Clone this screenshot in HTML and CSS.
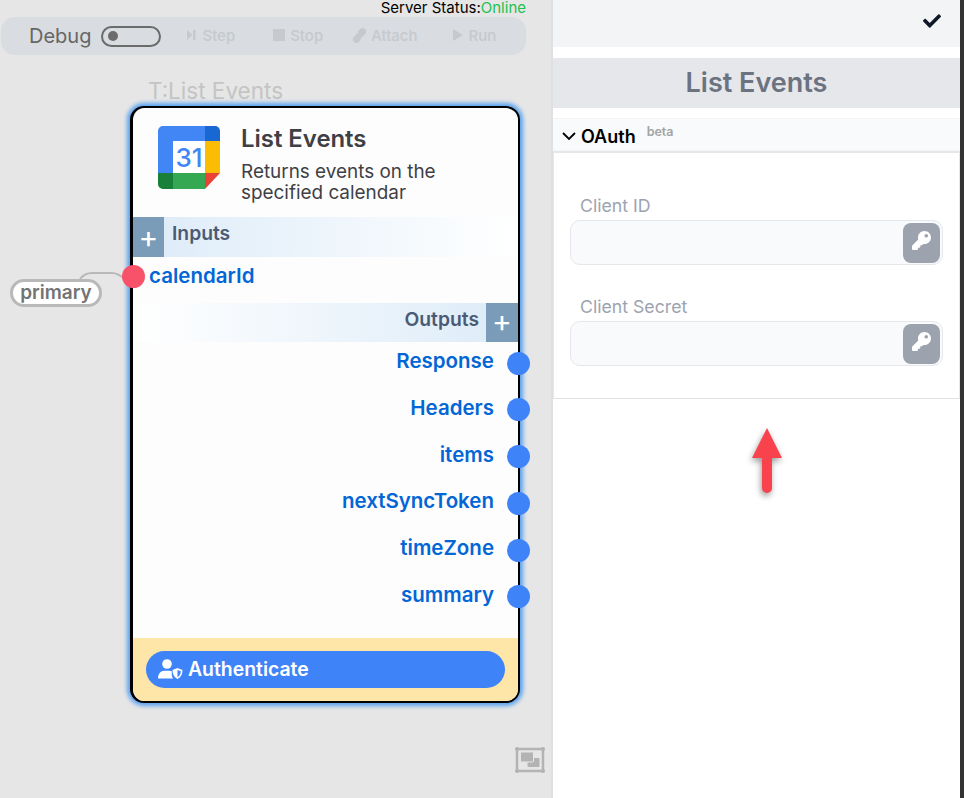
FILE: index.html
```html
<!DOCTYPE html>
<html lang="en">
<head>
  <meta charset="UTF-8">
  <meta name="viewport" content="width=device-width, initial-scale=1.0">
  <title>List Events</title>
  <link rel="stylesheet" href="styles.css">
</head>
<body>
  <!-- Flow canvas -->
  <main class="canvas">
    <div class="status">Server Status:<span class="status-on">Online</span></div>
    <div class="toolbar">
      <span class="debug-label">Debug</span>
      <span class="toggle"><span class="toggle-dot"></span></span>
      <span class="tool tool-step">
        <svg width="9" height="12" viewBox="0 0 9 12"><path d="M0 1l5.500 5L0 11zM6 1h2.500v10H6z"/></svg>Step
      </span>
      <span class="tool tool-stop">
        <svg width="12" height="12" viewBox="0 0 12 12"><rect width="12" height="12"/></svg>Stop
      </span>
      <span class="tool tool-attach">
        <svg width="15" height="15" viewBox="0 0 15 15" fill="none" stroke="#c6c9cd" stroke-width="1.600"><path d="M6.500 4l2-2.200a2.700 2.700 0 0 1 4 3.800l-2.500 2.600a2.700 2.700 0 0 1-3.800 0M8.500 11l-2 2.200a2.700 2.700 0 0 1-4-3.800L5 6.800a2.700 2.700 0 0 1 3.800 0"/></svg>Attach
      </span>
      <span class="tool tool-run">
        <svg width="10" height="12" viewBox="0 0 10 12"><path d="M0 0l10 6-10 6z"/></svg>Run
      </span>
    </div>

    <div class="node-title">T:List Events</div>

    <svg class="wire" width="70" height="30" viewBox="0 0 70 30" fill="none"><path d="M21 21c3-4 7-6 12-6h20c5 0 8 2 13 6" stroke="#b9b9b9" stroke-width="2"/></svg>
    <div class="chip">primary</div>

    <div class="node">
      <div class="node-head">
        <svg class="gcal" width="62" height="63" viewBox="0 0 62 63">
          <path d="M5 0h42v15H15v32H0V5a5 5 0 0 1 5-5z" fill="#4285f4"/>
          <path d="M47 0h10a5 5 0 0 1 5 5v10H47z" fill="#1967d2"/>
          <rect x="47" y="15" width="15" height="32" fill="#fbbc04"/>
          <path d="M47 47h15L47 63z" fill="#ea4335"/>
          <rect x="15" y="47" width="32" height="16" fill="#34a853"/>
          <path d="M0 47h15v16H5a5 5 0 0 1-5-5z" fill="#188038"/>
          <rect x="15" y="15" width="32" height="32" fill="#fff"/>
          <text x="31" y="41" text-anchor="middle" class="gcal-num">31</text>
        </svg>
        <div class="node-info">
          <h2 class="node-name">List Events</h2>
          <p class="node-desc">Returns events on the specified calendar</p>
        </div>
      </div>

      <div class="band band-in">
        <span class="plus">+</span>
        <span class="band-label">Inputs</span>
      </div>
      <div class="input-row">
        <span class="pin pin-in"></span>
        <span class="port">calendarId</span>
      </div>

      <div class="band band-out">
        <span class="band-label">Outputs</span>
        <span class="plus">+</span>
      </div>
      <ul class="outputs">
        <li class="port-row"><span class="port">Response</span><span class="pin pin-out"></span></li>
        <li class="port-row"><span class="port">Headers</span><span class="pin pin-out"></span></li>
        <li class="port-row"><span class="port">items</span><span class="pin pin-out"></span></li>
        <li class="port-row"><span class="port">nextSyncToken</span><span class="pin pin-out"></span></li>
        <li class="port-row"><span class="port">timeZone</span><span class="pin pin-out"></span></li>
        <li class="port-row"><span class="port">summary</span><span class="pin pin-out"></span></li>
      </ul>

      <div class="node-foot">
        <button class="auth-btn" type="button">
          <svg width="25" height="20" viewBox="0 0 25 20" fill="#fff">
            <circle cx="9" cy="5" r="4.800"/>
            <path d="M0 19.500c0-5 3-7.800 6-7.800h5c1 0 2 .2 2.800.6v3.200c0 1.600.6 3 1.500 4z"/>
            <path d="M19.500 9l5 1.900c0 4.200-1.600 7.500-5 9-3.400-1.500-5-4.800-5-9z"/>
            <path d="M19.500 11l3.300 1.200c-.1 2.700-1.300 4.900-3.300 5.900z" fill="#3f83f8"/>
          </svg>
          Authenticate
        </button>
      </div>
    </div>

    <svg class="map-btn" width="30" height="26" viewBox="0 0 30 26" fill="#b3b3b3">
      <rect x="2" y="2" width="26" height="22" fill="none" stroke="#b3b3b3" stroke-width="2.500"/>
      <circle cx="2" cy="2" r="2"/><circle cx="28" cy="2" r="2"/><circle cx="2" cy="24" r="2"/><circle cx="28" cy="24" r="2"/>
      <rect x="12.500" y="11" width="12" height="9" rx="1"/>
      <rect x="5.500" y="5" width="13" height="10" rx="1" stroke="#e6e6e6" stroke-width="1"/>
    </svg>
  </main>

  <!-- Settings panel -->
  <aside class="panel">
    <div class="panel-top">
      <svg width="18" height="18" viewBox="0 0 512 512" fill="#111827"><path d="M173.898 439.404l-166.4-166.4c-9.997-9.997-9.997-26.206 0-36.204l36.203-36.204c9.997-9.998 26.207-9.998 36.204 0L192 312.69 432.095 72.596c9.997-9.997 26.207-9.997 36.204 0l36.203 36.204c9.997 9.997 9.997 26.206 0 36.204l-294.4 294.401c-9.998 9.997-26.207 9.997-36.204-.001z"/></svg>
    </div>
    <h1 class="panel-title">List Events</h1>
    <section class="section">
      <div class="section-head">
        <svg width="14" height="9" viewBox="0 0 14 9"><path d="M1 1l6 6 6-6" fill="none" stroke="#000" stroke-width="1.800"/></svg>
        <span class="section-name">OAuth</span>
        <span class="beta">beta</span>
      </div>
      <div class="section-body">
        <label class="field-label">Client ID</label>
        <div class="field">
          <span class="key-btn">
            <svg class="key-icon" width="19" height="19" viewBox="0 0 512 512" fill="#fff"><path d="M512 176.001C512 273.203 433.202 352 336 352c-11.220 0-22.190-1.062-32.827-3.069l-24.012 27.014A23.999 23.999 0 0 1 261.223 384H224v40c0 13.255-10.745 24-24 24h-40v40c0 13.255-10.745 24-24 24H24c-13.255 0-24-10.745-24-24v-78.059c0-6.365 2.529-12.470 7.029-16.971l161.802-161.802C163.108 213.814 160 195.271 160 176 160 78.798 238.797.001 335.999 0 433.488-.001 512 78.511 512 176.001zM336 128c0 26.510 21.490 48 48 48s48-21.490 48-48-21.490-48-48-48-48 21.490-48 48z"/></svg>
          </span>
        </div>
        <label class="field-label">Client Secret</label>
        <div class="field">
          <span class="key-btn">
            <svg class="key-icon" width="19" height="19" viewBox="0 0 512 512" fill="#fff"><path d="M512 176.001C512 273.203 433.202 352 336 352c-11.220 0-22.190-1.062-32.827-3.069l-24.012 27.014A23.999 23.999 0 0 1 261.223 384H224v40c0 13.255-10.745 24-24 24h-40v40c0 13.255-10.745 24-24 24H24c-13.255 0-24-10.745-24-24v-78.059c0-6.365 2.529-12.470 7.029-16.971l161.802-161.802C163.108 213.814 160 195.271 160 176 160 78.798 238.797.001 335.999 0 433.488-.001 512 78.511 512 176.001zM336 128c0 26.510 21.490 48 48 48s48-21.490 48-48-21.490-48-48-48-48 21.490-48 48z"/></svg>
          </span>
        </div>
      </div>
    </section>
    <div class="panel-rest">
      <svg class="arrow" width="50" height="80" viewBox="0 0 50 80">
        <path d="M25 5l15 30H30v30a5 5 0 0 1-10 0V35H10z" fill="#f8424c"/>
      </svg>
    </div>
  </aside>
</body>
</html>
```

FILE: styles.css
```css
* {
  box-sizing: border-box;
}
html, body {
  height: 100%;
}
body {
  margin: 0;
  display: flex;
  overflow: hidden;
  padding-right: 4px;
  font-family: Inter, "Liberation Sans", sans-serif;
  background: #333;
}

/* canvas */
.canvas {
  position: relative;
  width: 553px;
  flex: none;
  background: #e6e6e6;
  border-right: 2px solid #dee0e3;
}
.status {
  height: 17px;
  padding-right: 25px;
  text-align: right;
  font-size: 15px;
  line-height: 15px;
  color: #000;
}
.status-on {
  color: #1ec14f;
}
.toolbar {
  display: flex;
  align-items: center;
  width: 525px;
  height: 38px;
  margin-left: 1px;
  padding-left: 28px;
  border-radius: 14px;
  background: #d9dce0;
}
.debug-label {
  font-size: 20px;
  color: #666;
}
.toggle {
  display: flex;
  align-items: center;
  width: 60px;
  height: 21px;
  margin-left: 10px;
  padding-left: 5px;
  border: 2px solid #6b6b6b;
  border-radius: 11px;
}
.toggle-dot {
  width: 10px;
  height: 10px;
  border-radius: 50%;
  background: #6b6b6b;
}
.tool {
  display: flex;
  align-items: center;
  font-size: 15px;
  font-weight: 500;
  line-height: 16px;
  color: #c6c9cd;
}
.tool svg {
  fill: #c6c9cd;
  margin-top: -2px;
}
.tool-step { margin-left: 26px; gap: 6px; }
.tool-stop { margin-left: 38px; gap: 5px; }
.tool-attach { margin-left: 29px; gap: 4px; }
.tool-run { margin-left: 35px; gap: 6px; }

.node-title {
  position: absolute;
  left: 148px;
  top: 77px;
  font-size: 22.500px;
  color: #c4c4c4;
}
.wire {
  position: absolute;
  left: 59px;
  top: 258px;
}
.chip {
  position: absolute;
  left: 10px;
  top: 279px;
  width: 92px;
  height: 28px;
  border: 3px solid #b9b9b9;
  border-radius: 14px;
  background: #fff;
  text-align: center;
  font-size: 19px;
  font-weight: 600;
  line-height: 22px;
  color: #737373;
}
.map-btn {
  position: absolute;
  left: 515px;
  top: 747px;
}

/* node */
.node {
  position: absolute;
  left: 130px;
  top: 106px;
  width: 390px;
  height: 597px;
  display: flex;
  flex-direction: column;
  border: 2px solid #000;
  border-left-width: 3px;
  border-radius: 14px;
  background: #fdfdfd;
  box-shadow: 0 0 4px 3px #5aa2ee;
}
.node-head {
  display: flex;
  height: 109px;
  padding: 18px 0 0 25px;
}
.gcal {
  flex: none;
}
.gcal-num {
  font-family: Inter, sans-serif;
  font-size: 26px;
  font-weight: 500;
  fill: #4285f4;
}
.node-info {
  margin: -1px 0 0 21px;
}
.node-name {
  margin: 0;
  font-size: 23.900px;
  font-weight: 600;
  line-height: 28px;
  color: #3f3f46;
}
.node-desc {
  width: 240px;
  margin: 8px 0 0;
  font-size: 18.900px;
  line-height: 21px;
  color: #3f3f46;
}
.band {
  display: flex;
  height: 40px;
  font-size: 19.300px;
  font-weight: 600;
  color: #4b5b73;
}
.band-in {
  background: linear-gradient(90deg, #dcebf8, #fff);
}
.band-out {
  height: 38.500px;
  justify-content: flex-end;
  background: linear-gradient(90deg, #fff, #dcebf8);
}
.band-label {
  padding-top: 4px;
  line-height: 24px;
}
.band-in .band-label { margin-left: 8px; }
.band-out .band-label { margin-right: 7px; }
.plus {
  width: 31px;
  text-align: center;
  background: #7b9cb8;
  color: #fff;
  font-size: 30px;
  font-weight: 400;
  line-height: 40px;
}
.band-out .plus {
  width: 32px;
  line-height: 36px;
}
.input-row {
  position: relative;
  height: 46px;
  padding-left: 16px;
}
.port {
  font-size: 20.500px;
  font-weight: 600;
  line-height: 38px;
  color: #0366d6;
}
.pin {
  position: absolute;
  width: 23px;
  height: 23px;
  border-radius: 50%;
}
.pin-in {
  left: -11px;
  top: 8px;
  background: #f8516a;
}
.pin-out {
  right: -12px;
  top: 10px;
  background: #3f83f8;
}
.outputs {
  flex: 1;
  margin: 0;
  padding: 0;
  list-style: none;
}
.port-row {
  position: relative;
  height: 46.800px;
  padding: 0.500px 24px 0 0;
  text-align: right;
}
.node-foot {
  height: 63px;
  padding: 13px 13px 0;
  border-radius: 0 0 12px 12px;
  background: #fde6a8;
}
.auth-btn {
  display: flex;
  align-items: center;
  gap: 5px;
  width: 100%;
  height: 37px;
  padding: 0 0 1px 12px;
  border: 0;
  border-radius: 19px;
  background: #3f83f8;
  color: #fff;
  font-family: inherit;
  font-size: 19.400px;
  font-weight: 600;
}

/* settings panel */
.panel {
  flex: 1;
  display: flex;
  flex-direction: column;
  min-width: 0;
  background: #fff;
}
.panel-top {
  display: flex;
  justify-content: flex-end;
  align-items: flex-start;
  height: 47px;
  padding: 12px 19px 0 0;
  background: #f3f4f6;
}
.panel-title {
  height: 50px;
  margin: 11px 0 10px;
  text-align: center;
  background: #e5e7eb;
  color: #6b7280;
  font-size: 27px;
  font-weight: 600;
  line-height: 50px;
}
.section-head {
  display: flex;
  align-items: center;
  height: 33px;
  padding: 3px 0 0 9px;
  border-top: 1px solid #f3f4f6;
  border-bottom: 1px solid #f3f4f6;
  background: #f9fafb;
}
.section-name {
  margin-left: 5px;
  font-size: 18px;
  font-weight: 600;
  color: #000;
}
.beta {
  margin: -10px 0 0 11px;
  font-size: 12.500px;
  font-weight: 600;
  color: #a3a3a3;
}
.section-body {
  height: 248px;
  padding: 42px 16px 0;
  border: 1px solid #e5e7eb;
  border-top-width: 2px;
  border-bottom-color: #e0e2e6;
}
.field-label {
  display: block;
  margin-left: 10px;
  font-size: 17.700px;
  line-height: 22px;
  color: #9ca3af;
}
.field {
  display: flex;
  justify-content: flex-end;
  align-items: center;
  height: 45px;
  margin: 3px 0 31px;
  padding-right: 2px;
  border: 1px solid #e5e7eb;
  border-radius: 10px;
  background: #f9fafb;
}
.key-btn {
  display: flex;
  align-items: center;
  justify-content: center;
  width: 37px;
  height: 40px;
  border-radius: 8px;
  background: #9ca3af;
}
.key-icon {
  margin-top: -4px;
}
.panel-rest {
  flex: 1;
  position: relative;
}
.arrow {
  position: absolute;
  left: 189px;
  top: 24px;
  filter: drop-shadow(-1px 3px 3px rgba(0, 0, 0, 0.4));
}
```
